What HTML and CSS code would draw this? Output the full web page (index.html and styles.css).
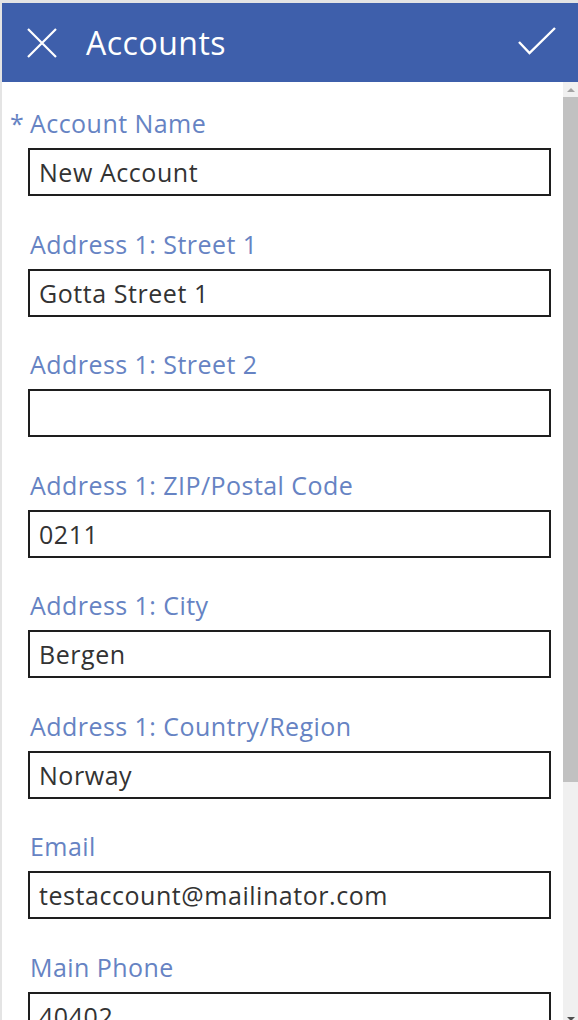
FILE: index.html
```html
<!DOCTYPE html>
<html lang="en">
<head>
  <meta charset="UTF-8">
  <meta name="viewport" content="width=device-width, initial-scale=1.0">
  <title>Accounts</title>
  <link rel="stylesheet" href="styles.css">
</head>
<body>
  <div class="app">
    <header class="topbar">
      <svg class="icon-close" width="30" height="30" viewBox="0 0 30 30">
        <path d="M1 1 L29 29 M29 1 L1 29" stroke="#fff" stroke-width="2.2" fill="none"/>
      </svg>
      <h1 class="title">Accounts</h1>
      <svg class="icon-check" width="38" height="29" viewBox="0 0 38 29">
        <polyline points="1,15 11.5,26 37,1" stroke="#fff" stroke-width="2.4" fill="none"/>
      </svg>
    </header>
    <div class="content">
      <form class="form">
        <div class="field">
          <label class="label"><span class="required">*</span>Account Name</label>
          <div class="input">New Account</div>
        </div>
        <div class="field">
          <label class="label">Address 1: Street 1</label>
          <div class="input">Gotta Street 1</div>
        </div>
        <div class="field">
          <label class="label">Address 1: Street 2</label>
          <div class="input"></div>
        </div>
        <div class="field">
          <label class="label">Address 1: ZIP/Postal Code</label>
          <div class="input">0211</div>
        </div>
        <div class="field">
          <label class="label">Address 1: City</label>
          <div class="input">Bergen</div>
        </div>
        <div class="field">
          <label class="label">Address 1: Country/Region</label>
          <div class="input">Norway</div>
        </div>
        <div class="field">
          <label class="label">Email</label>
          <div class="input">testaccount@mailinator.com</div>
        </div>
        <div class="field">
          <label class="label">Main Phone</label>
          <div class="input">40402</div>
        </div>
      </form>
      <div class="scrollbar">
        <div class="arrow arrow-up"></div>
        <div class="thumb"></div>
        <div class="track"></div>
        <div class="arrow arrow-down"></div>
      </div>
    </div>
  </div>
</body>
</html>
```
FILE: styles.css
```css
html, body {
  margin: 0px;
  height: 100%;
}
body {
  background-color: #e4e4e4;
  font-family: "Open Sans", "Noto Sans", sans-serif;
  overflow: hidden;
}
.app {
  margin: 3px 0 0 2px;
  height: calc(100vh - 3px);
  background-color: #fff;
  display: flex;
  flex-direction: column;
}
.topbar {
  height: 79px;
  flex: none;
  background-color: #3e5fab;
  display: flex;
  align-items: center;
  padding: 0 22px 0 25px;
}
.icon-close {
  flex: none;
}
.title {
  margin: 0 0 0 29px;
  flex: 1;
  color: #fff;
  font-size: 32px;
  font-weight: 400;
  line-height: 40px;
  letter-spacing: 0.5px;
}
.icon-check {
  flex: none;
  margin-top: -3px;
}
.content {
  flex: 1;
  display: flex;
  overflow: hidden;
}
.form {
  flex: 1;
  padding: 24px 12px 0 26px;
}
.field {
  margin-bottom: 30.5px;
}
.label {
  display: block;
  height: 34px;
  line-height: 34px;
  margin-bottom: 8px;
  padding-left: 2px;
  color: #6683c3;
  font-size: 25px;
  letter-spacing: 0.45px;
}
.required {
  display: inline-block;
  width: 20px;
  margin-left: -20px;
}
.input {
  height: 48px;
  box-sizing: border-box;
  border: 2px solid #1e1e1e;
  padding-left: 9px;
  line-height: 44px;
  color: #333;
  font-size: 25px;
  letter-spacing: 0.55px;
}
.scrollbar {
  width: 15px;
  flex: none;
  display: flex;
  flex-direction: column;
  background-color: #f0f0f0;
}
.arrow {
  height: 15px;
  flex: none;
  display: flex;
  align-items: center;
  justify-content: center;
}
.arrow::after {
  content: "";
  width: 0;
  height: 0;
  border-left: 4px solid transparent;
  border-right: 4px solid transparent;
}
.arrow-up::after {
  border-bottom: 4px solid #a3a3a3;
}
.arrow-down::after {
  border-top: 4px solid #505050;
}
.thumb {
  height: 685px;
  flex: none;
  background-color: #c1c1c1;
}
.track {
  height: 229px;
  flex: none;
}
```
